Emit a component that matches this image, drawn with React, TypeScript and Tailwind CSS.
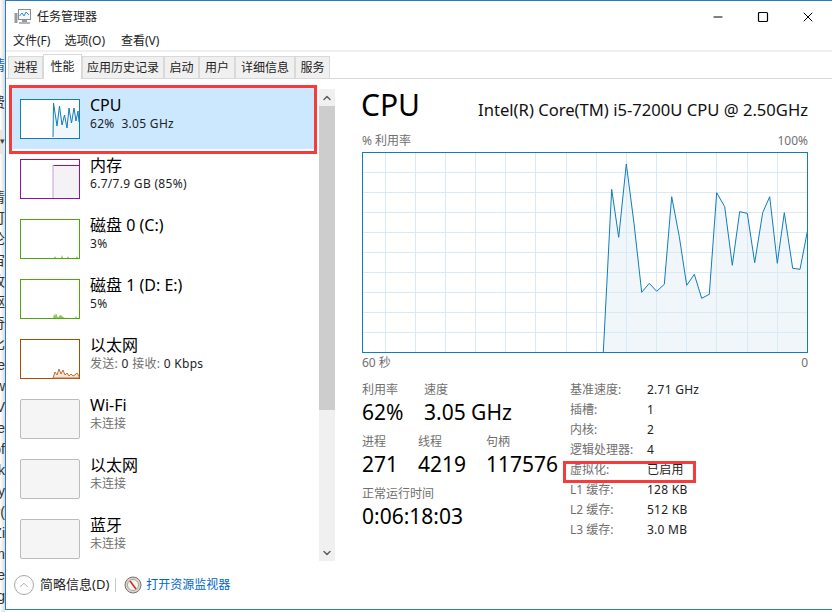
import { Minus, Square, X, ChevronUp, ChevronDown } from 'lucide-react'

const tabs = [
  { name: '进程', w: 'w-[35px]' },
  { name: '性能', w: 'w-[39px]', active: true },
  { name: '应用历史记录', w: 'w-[82px]' },
  { name: '启动', w: 'w-[35px]' },
  { name: '用户', w: 'w-[36px]' },
  { name: '详细信息', w: 'w-[60px]' },
  { name: '服务', w: 'w-[35px]' },
]

// traced from the reference, in 3x crop coordinates
const cpuPts = [
  [760, 787], [785, 298], [806, 442], [829, 222], [852, 400], [875, 607], [898, 580], [920, 604],
  [943, 583], [965, 320], [988, 440], [1010, 586], [1033, 553], [1055, 625], [1078, 613], [1100, 308],
  [1124, 350], [1147, 526], [1169, 365], [1192, 370], [1214, 518], [1238, 368], [1259, 320], [1282, 520],
  [1303, 368], [1328, 535], [1350, 538], [1372, 425],
]
const line = cpuPts.map(([x, y]) => `${((x - 36) / 3).toFixed(1)},${((y - 186) / 3).toFixed(1)}`).join(' ')
const vLines = [23.5, 53.5, 83.5, 113.5, 143.5, 173.5, 204.5, 234.5, 264.5, 294.5, 324.5, 354.5, 385.5, 415.5]
const hLines = [20.5, 40.5, 60.5, 80.5, 100.5, 120.5, 140.5, 160.5, 180.5]

const stripLines = ['清', '可', '论', '宙', '收', '驱', '奇', '比', 're', 'w', 'V', 'e', 'of', 'k', 'oy', 'v(', 'Zi', 'm', 're', 'g']

function CpuThumb() {
  return (
    <svg width="60" height="40" className="block shrink-0">
      <rect x="0.5" y="0.5" width="59" height="39" fill="#fff" stroke="#117dbb" />
      <polygon points="33,38 33.5,4 37,27 39.5,7 42,26 44.5,16 47,29 49,9 51.5,24 54,9 56,22 58,12 59,23 59,39 33,39" fill="#f1f6fa" />
      <polyline points="33,38 33.5,4 37,27 39.5,7 42,26 44.5,16 47,29 49,9 51.5,24 54,9 56,22 58,12 59,23" fill="none" stroke="#117dbb" />
    </svg>
  )
}

function MemThumb() {
  return (
    <svg width="60" height="40" className="block shrink-0">
      <rect x="33" y="6" width="26" height="33" fill="#f4f2f4" />
      <line x1="33" y1="39" x2="33" y2="6" stroke="#c9a0dc" />
      <polyline points="33.5,6.5 59,6.5" fill="none" stroke="#8b12ae" />
      <rect x="0.5" y="0.5" width="59" height="39" fill="none" stroke="#8b12ae" />
    </svg>
  )
}

function DiskThumb({ spikes }: { spikes: string }) {
  return (
    <svg width="60" height="40" className="block shrink-0">
      <rect x="0.5" y="0.5" width="59" height="39" fill="#fff" stroke="#4da60c" />
      <polygon points={spikes} fill="#8fc55f" />
    </svg>
  )
}

function NetThumb() {
  return (
    <svg width="60" height="40" className="block shrink-0">
      <rect x="0.5" y="0.5" width="59" height="39" fill="#fff" stroke="#a74f01" />
      <polygon points="33,39 35,33 37,36 39,30 41,35 43,31 45,36 47,34 49,37 51,35 53,37 55,36 57,34 59,37 59,39" fill="#f3e6d8" stroke="#b9733a" />
    </svg>
  )
}

const emptyThumb = <div className="w-[60px] h-[40px] shrink-0 bg-[#f5f5f5] border border-[#bcbcbc] rounded-[2px]" />

const items = [
  { thumb: <CpuThumb />, title: 'CPU', sub: '62%  3.05 GHz', selected: true },
  { thumb: <MemThumb />, title: '内存', sub: '6.7/7.9 GB (85%)' },
  { thumb: <DiskThumb spikes="34,39 35,37 36,39 41,39 42,36 43,39 47,39 48,37 49,39 56,39 57,37 58,39" />, title: '磁盘 0 (C:)', sub: '3%' },
  { thumb: <DiskThumb spikes="33,39 34,35 35,37 36,34 38,39 39,37 41,36 43,38 45,39 55,39 56,37 57,39" />, title: '磁盘 1 (D: E:)', sub: '5%' },
  { thumb: <NetThumb />, title: '以太网', sub: <><span className="text-[#707070]">发送:</span> 0 <span className="text-[#707070]">接收:</span> 0 Kbps</> },
  { thumb: emptyThumb, title: 'Wi-Fi', sub: '未连接', gray: true },
  { thumb: emptyThumb, title: '以太网', sub: '未连接', gray: true },
  { thumb: emptyThumb, title: '蓝牙', sub: '未连接', gray: true },
]

const details = [
  ['基准速度:', '2.71 GHz'],
  ['插槽:', '1'],
  ['内核:', '2'],
  ['逻辑处理器:', '4'],
  ['虚拟化:', '已启用'],
  ['L1 缓存:', '128 KB'],
  ['L2 缓存:', '512 KB'],
  ['L3 缓存:', '3.0 MB'],
]

function Stat({ label, value, w }: { label: string; value: string; w: string }) {
  return (
    <div className={w}>
      <div className="text-[12px] leading-[16px] text-[#707070]">{label}</div>
      <div className="text-[21px] leading-[26px] mt-[1px] text-black whitespace-nowrap">{value}</div>
    </div>
  )
}

export default function App() {
  return (
    <div className="flex w-[832px] h-[612px] overflow-hidden bg-white font-['Noto_Sans','Noto_Sans_CJK_SC',sans-serif]">
      {/* window behind, only its right edge shows */}
      <div className="w-[5px] h-[612px] shrink-0 overflow-hidden bg-linear-to-r from-white to-[#dcdcdc] font-['Liberation_Sans','Noto_Sans_CJK_SC',sans-serif] text-[14px] text-[#333]">
        <div className="h-[57px]" />
        <div className="flex justify-end leading-[16px] text-[#1d5fc0]"><span className="shrink-0">请</span></div>
        <div className="h-[21px]" />
        <div className="flex justify-end leading-[16px]"><span className="shrink-0">费</span></div>
        <div className="h-[20px]" />
        <div className="h-[24px] bg-[#e6e6e6] flex justify-end items-center text-[9px] text-[#444]"><span className="shrink-0">▾</span></div>
        <div className="h-[33px]" />
        {stripLines.map((s, i) => (
          <div key={i} className="flex justify-end leading-[21px] h-[21px]"><span className="shrink-0">{s}</span></div>
        ))}
      </div>

      <div className="w-[827px] h-[610px] shrink-0 flex flex-col border-l border-t border-b border-[#2b7cc4] text-black">
        {/* title bar */}
        <div className="h-[31px] flex items-center justify-between">
          <div className="flex items-center pl-[8px]">
            <svg width="17" height="16" viewBox="0 0 17 16" className="block">
              <rect x="0.5" y="4" width="3" height="10" fill="#9a9a9a" />
              <rect x="4.5" y="0.5" width="12" height="10" fill="#f2f8fc" stroke="#8c8c8c" />
              <polyline points="5.5,7 8,4 10,7 12,3 15,6" fill="none" stroke="#2f8fd0" />
              <rect x="8" y="11" width="5" height="2" fill="#9a9a9a" />
              <rect x="5" y="13" width="11" height="2" fill="#b5b5b5" />
            </svg>
            <span className="text-[12px] ml-[6px] leading-[16px] text-[#222]">任务管理器</span>
          </div>
          <div className="flex pr-[2px]">
            <div className="w-[45px] h-[31px] flex items-center justify-center"><Minus size={14} strokeWidth={1} absoluteStrokeWidth /></div>
            <div className="w-[45px] h-[31px] flex items-center justify-center"><Square size={12} strokeWidth={1.2} absoluteStrokeWidth /></div>
            <div className="w-[45px] h-[31px] flex items-center justify-center"><X size={16} strokeWidth={1} absoluteStrokeWidth /></div>
          </div>
        </div>

        {/* menu */}
        <div className="h-[18px] flex items-center pl-[7px] text-[12px] text-[#222]">
          <span>文件(F)</span>
          <span className="ml-[14px]">选项(O)</span>
          <span className="ml-[16px]">查看(V)</span>
        </div>
        <div className="h-[2px] bg-[#f0f0f0]" />

        {/* tabs */}
        <div className="h-[27px] flex items-end pl-[2px] border-b border-[#d9d9d9] text-[12px] text-[#222]">
          {tabs.map((t) => (
            <div
              key={t.name}
              className={
                t.active
                  ? `${t.w} h-[25px] -mb-[1px] bg-white border-t border-l border-r border-[#d9d9d9] flex items-center justify-center`
                  : `${t.w} h-[22px] bg-[#f0f0f0] border-t border-l border-r border-[#d9d9d9] flex items-center justify-center`
              }
            >
              {t.name}
            </div>
          ))}
        </div>

        {/* body */}
        <div className="flex flex-1 min-h-0">
          <div className="w-[329px] shrink-0 flex flex-col">
            <div className="flex pt-[9px] pl-[6px] h-[482px]">
              <div className="relative w-[302px] h-[473px]">
                <div className="h-[473px] overflow-hidden">
                  {items.map((it, i) => (
                    <div
                      key={i}
                      className={
                        it.selected
                          ? 'h-[61px] pt-[11px] pl-[8px] flex bg-[#cce8ff]'
                          : 'h-[60px] pt-[10px] pl-[8px] flex'
                      }
                    >
                      {it.thumb}
                      <div className="ml-[10px] -mt-[5px]">
                        <div className="text-[16px] leading-[22px] text-black whitespace-nowrap">{it.title}</div>
                        <div className={it.gray ? 'text-[12px] leading-[16px] text-[#707070]' : 'text-[12px] leading-[16px] tracking-[0.3px] text-[#222] whitespace-pre'}>{it.sub}</div>
                      </div>
                    </div>
                  ))}
                </div>
                <div className="absolute -top-[3px] -left-[3px] w-[308px] h-[69px] border-[3px] border-[#f73b3b]" />
              </div>
              <div className="ml-[5px] mt-[1px] w-[16px] h-[472px] bg-[#f0f0f0] flex flex-col text-[#606060]">
                <div className="h-[17px] flex items-center justify-center"><ChevronUp size={12} strokeWidth={3} /></div>
                <div className="h-[304px] bg-[#cdcdcd]" />
                <div className="flex-1" />
                <div className="h-[17px] flex items-center justify-center"><ChevronDown size={12} strokeWidth={3} /></div>
              </div>
            </div>

            {/* footer */}
            <div className="flex items-center h-[48px] pl-[8px]">
              <div className="w-[20px] h-[20px] rounded-full border border-[#a8a8a8] flex items-center justify-center text-[#a0a0a0]">
                <ChevronUp size={14} strokeWidth={1.5} />
              </div>
              <span className="ml-[6px] text-[13px] text-[#222]">简略信息(D)</span>
              <div className="w-px h-[14px] bg-[#c8c8c8] ml-[6px]" />
              <svg width="18" height="18" viewBox="0 0 18 18" className="block ml-[8px]">
                <circle cx="9" cy="9" r="8" fill="#d8d4cc" stroke="#77736b" />
                <circle cx="9" cy="9" r="5.5" fill="#f8f6f0" stroke="#a8a49c" />
                <line x1="6" y1="5" x2="12" y2="13" stroke="#d02a20" strokeWidth="1.5" />
              </svg>
              <span className="ml-[4px] text-[12px] text-[#0066cc]">打开资源监视器</span>
            </div>
          </div>

          {/* right panel */}
          <div className="pl-[27px] w-[472px] shrink-0">
            <div className="flex items-end justify-between h-[46px] pt-[6px] w-[446px]">
              <span className="text-[30px] leading-[40px] -ml-[1px]">CPU</span>
              <span className="text-[16.6px] leading-[22px] mb-[4px] text-[#111] whitespace-nowrap">Intel(R) Core(TM) i5-7200U CPU @ 2.50GHz</span>
            </div>
            <div className="flex justify-between w-[446px] text-[12px] leading-[16px] text-[#707070] mt-[8px]">
              <span>% 利用率</span>
              <span>100%</span>
            </div>
            <svg width="446" height="201" className="block mt-[3px]">
              <rect width="446" height="201" fill="#fff" />
              <polygon points={`${line} 445,200 241,200`} fill="#f1f6fa" />
              {vLines.map((x) => <line key={x} x1={x} y1="0" x2={x} y2="201" stroke="#d9eaf4" />)}
              {hLines.map((y) => <line key={y} x1="0" y1={y} x2="446" y2={y} stroke="#d9eaf4" />)}
              <polyline points={line} fill="none" stroke="#117dbb" strokeWidth="1" />
              <rect x="0.5" y="0.5" width="445" height="200" fill="none" stroke="#117dbb" />
            </svg>
            <div className="flex justify-between w-[446px] text-[12px] leading-[16px] text-[#707070] mt-[2px]">
              <span>60 秒</span>
              <span>0</span>
            </div>

            <div className="flex mt-[9px] w-[446px]">
              <div className="w-[208px] shrink-0 pt-[2px]">
                <div className="flex">
                  <Stat label="利用率" value="62%" w="w-[62px]" />
                  <Stat label="速度" value="3.05 GHz" w="w-[120px]" />
                </div>
                <div className="flex mt-[9px]">
                  <Stat label="进程" value="271" w="w-[56px]" />
                  <Stat label="线程" value="4219" w="w-[68px]" />
                  <Stat label="句柄" value="117576" w="w-[84px]" />
                </div>
                <div className="mt-[9px]">
                  <Stat label="正常运行时间" value="0:06:18:03" w="w-[200px]" />
                </div>
              </div>
              <div className="relative">
                {details.map(([k, v]) => (
                  <div key={k} className="flex h-[20px] items-center text-[12px]">
                    <span className="w-[77px] text-[#707070] whitespace-pre">{k}</span>
                    <span className="text-[#222] tracking-[0.25px]">{v}</span>
                  </div>
                ))}
                <div className="absolute top-[81px] -left-[7px] w-[133px] h-[22px] border-[3px] border-[#f73b3b]" />
              </div>
            </div>
          </div>
        </div>
      </div>
    </div>
  )
}
